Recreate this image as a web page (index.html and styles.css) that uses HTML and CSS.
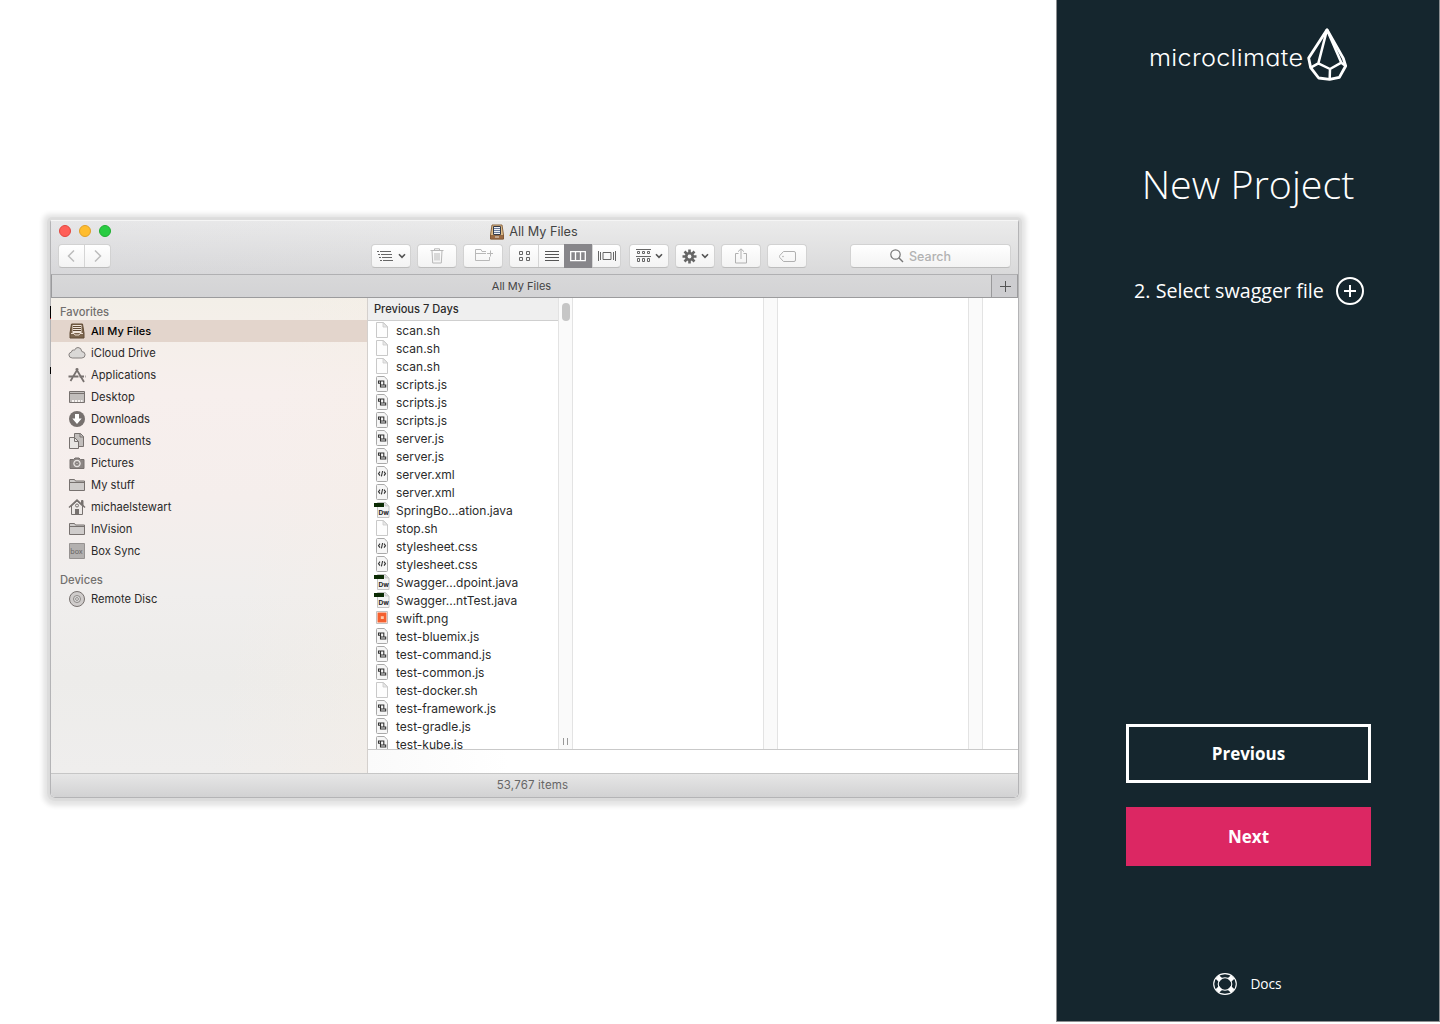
FILE: index.html
```html
<!DOCTYPE html>
<html lang="en">
<head>
<meta charset="utf-8">
<title>Microclimate - New Project</title>
<link rel="stylesheet" href="styles.css">
</head>
<body>
<svg class="defs" width="0" height="0">
  <symbol id="doc" viewBox="0 0 16 18"><path d="M2.5 1.5h7l4 4v11h-11z" fill="#fdfdfd" stroke="#c9c9c9"/><path d="M9 1.5V6h4.5z" fill="#e9e9e9" stroke="#c9c9c9" stroke-width=".8"/></symbol>
  <symbol id="js" viewBox="0 0 16 18"><path d="M3.5 1.5h6.7l3.3 3.3v10.7q0 1-1 1h-9q-1 0-1-1v-13q0-1 1-1z" fill="#f6f6f6" stroke="#a9a9a9"/><path d="M6.500 8.200h-2V6h5.300v4.500M6.500 6v6h5.200v-2H6.500" fill="none" stroke="#333" stroke-width="1.100"/></symbol>
  <symbol id="code" viewBox="0 0 16 18"><path d="M3.500 1.500h6.700l3.300 3.300v10.700q0 1-1 1h-9q-1 0-1-1v-13q0-1 1-1z" fill="#f6f6f6" stroke="#a9a9a9"/><path d="M6 6.700 4.500 8.700 6 10.700M10 6.700l1.500 2L10 10.700M8.600 6l-1.200 5.400" fill="none" stroke="#333" stroke-width="1.100"/></symbol>
  <symbol id="dw" viewBox="0 0 16 18"><path d="M3.500 1.500h8l3.500 3.500v11.500H3.500z" fill="#f4f4f4" stroke="#c4c4c4"/><path d="M11 1.500V5h4" fill="#ddd" stroke="#bbb" stroke-width=".7"/><path d="M0 2h10v4H0z" fill="#0c2c04"/><text x="4.500" y="13.800" font-family="Inter, sans-serif" font-weight="700" font-size="6.600" fill="#222">Dw</text></symbol>
  <symbol id="png" viewBox="0 0 16 18"><path d="M2.500 2.500h11v12h-11z" fill="#fff" stroke="#c2c2c2"/><path d="M3.500 3.500h9v10h-9z" fill="#f4602f"/><path d="M6.800 7.200h3v2.800h-3z" fill="#ffc9a8"/></symbol>
  <symbol id="folder" viewBox="0 0 18 18"><path d="M1.500 14.500v-11h5l1 1.500h9v9.500z" fill="#cfcccb" stroke="#77716f"/><path d="M1.500 6.500h15" stroke="#77716f"/></symbol>
  <symbol id="chev" viewBox="0 0 8 6"><path d="M1 1.200 4 4.400 7 1.200" fill="none" stroke="#555" stroke-width="1.600"/></symbol>
</svg>
<div class="page">
  <main class="stage">
    <section class="window">
      <header class="chrome">
        <div class="title-row">
          <div class="lights"><i class="red"></i><i class="amber"></i><i class="green"></i></div>
          <div class="title">
            <svg width="14" height="16" viewBox="0 0 14 16"><path d="M2 1h10l1.500 10v4H.5v-4z" fill="#e0bd88" stroke="#8a6643"/><path d="M3.500 2.500h7v8h-7z" fill="#eef1f5" stroke="#343a48"/><path d="M4 4.500h6M4 6.500h6M4 8.500h6" stroke="#6d7f9f"/><path d="M.5 11.500h13V15H.5z" fill="#9a6a43" stroke="#754c2c" stroke-width=".6"/><path d="M5 13h4" stroke="#e8e0d8"/></svg>
            <span>All My Files</span>
          </div>
        </div>
        <div class="toolbar">
          <div class="group nav">
            <span><svg width="9" height="14" viewBox="0 0 9 14"><path d="M7 1.500 1.500 7 7 12.500" fill="none" stroke="#bcbcbc" stroke-width="1.500"/></svg></span>
            <span><svg width="9" height="14" viewBox="0 0 9 14"><path d="M2 1.500 7.500 7 2 12.500" fill="none" stroke="#bcbcbc" stroke-width="1.500"/></svg></span>
          </div>
          <div class="group arrange"><svg width="17" height="12" viewBox="0 0 17 12"><path d="M0 1.500h2M3 1.500h11M1 4.500h2M4 4.500h11M2 7.500h2M5 7.500h10M3 10.500h2M6 10.500h10" stroke="#666" fill="none"/></svg><svg width="8" height="6"><use href="#chev"/></svg></div>
          <div class="group"><svg width="14" height="16" viewBox="0 0 14 16"><path d="M.5 2.500h13M4.500 2.500V.8h5v1.700M2 2.500l.7 12.500h8.600L12 2.500M5 5v7.500M7 5v7.500M9 5v7.500" fill="none" stroke="#b8b8b8"/></svg></div>
          <div class="group"><svg class="newfolder" width="18" height="13" viewBox="0 0 18 13"><path d="M11 2.500H7L6 .5H.5v11h14V8M.5 4.500H11M12 4.500h6M15.500 1.500v6" fill="none" stroke="#b8b8b8"/></svg></div>
          <div class="group views">
            <span><svg width="11" height="11" viewBox="0 0 11 11"><path d="M.5.500h3v3h-3zM7.500.500h3v3h-3zM.5 6.500h3v3h-3zM7.500 6.500h3v3h-3z" fill="none" stroke="#666"/></svg></span>
            <span><svg width="14" height="11" viewBox="0 0 14 11"><path d="M0 .5h14M0 3.500h14M0 6.500h14M0 9.500h14" stroke="#555"/></svg></span>
            <span class="on"><svg width="16" height="11" viewBox="0 0 16 11"><path d="M.7.700h14.600v9H.7zM5.500.700v9M10.500.700v9" fill="none" stroke="#fff" stroke-width="1.300"/></svg></span>
            <span><svg width="18" height="11" viewBox="0 0 18 11"><path d="M.5 0v10M2.500 1v8M15.500 1v8M17.500 0v10M5 1.500h8v7H5z" fill="none" stroke="#666"/></svg></span>
          </div>
          <div class="group sort"><svg width="15" height="14" viewBox="0 0 15 14"><path d="M0 .5h15M0 7.500h15M1.500 2.500h2v2h-2zM6.500 2.500h2v2h-2zM11.500 2.500h2v2h-2zM1.500 9.500h2v3h-2zM6.500 9.500h2v3h-2zM11.500 9.500h2v3h-2z" fill="none" stroke="#666"/></svg><svg width="8" height="6"><use href="#chev"/></svg></div>
          <div class="group gear"><svg width="15" height="15" viewBox="-7.500 -7.500 15 15"><g stroke="#666" stroke-width="2.600"><path d="M0-7V7M-7 0H7M-5-5 5 5M5-5-5 5"/></g><circle r="4.600" fill="#666"/><circle r="1.900" fill="#f7f7f7"/></svg><svg width="8" height="6"><use href="#chev"/></svg></div>
          <div class="group"><svg width="12" height="16" viewBox="0 0 12 16"><path d="M3.500 5.500h-3v9.500h11V5.500h-3M6 11V1M3 3.700 6 .8l3 2.900" fill="none" stroke="#b0b0b0"/></svg></div>
          <div class="group"><svg width="17" height="11" viewBox="0 0 17 11"><path d="M4.500.500H15q1.500 0 1.500 1.500v7q0 1.500-1.500 1.500H4.500L.8 6.500q-.6-1 0-2z" fill="none" stroke="#b0b0b0"/><circle cx="4" cy="5.500" r=".8" fill="#b0b0b0"/></svg></div>
          <div class="search"><svg width="14" height="14" viewBox="0 0 14 14"><circle cx="5.500" cy="5.500" r="4.700" fill="none" stroke="#777" stroke-width="1.200"/><path d="m9 9 4 4" stroke="#777" stroke-width="1.400"/></svg><span>Search</span></div>
        </div>
      </header>
      <div class="tabs"><div class="tab">All My Files</div><div class="add"><svg width="11" height="11"><path d="M0 5.500h11M5.500 0v11" stroke="#555"/></svg></div></div>
      <div class="content">
        <nav class="places">
          <h3>Favorites</h3>
          <a class="current"><svg viewBox="0 0 18 18"><path d="M3.500 2h11l1.500 9v5H2v-5z" fill="#7c664e" stroke="#604a34"/><path d="M4.500 3h9v8h-9z" fill="#f0e4da"/><path d="M5 4.500h8M5 6.500h8M5 8.500h8" stroke="#604a34"/><path d="M3 11.500h3l1 1.500h4l1-1.500h3" fill="none" stroke="#eadbcf"/></svg>All My Files</a>
          <a><svg viewBox="0 0 18 18"><path d="M4.200 14q-3.300-.3-3.300-3.100 0-2.300 2.600-2.900 0-2 2-2 .5 0 1 .2Q7.500 3.500 10 3.500q3.300 0 3.800 4 3.300.3 3.300 3.300 0 3-3.200 3.200z" fill="#dad8d6" stroke="#85807e"/></svg>iCloud Drive</a>
          <a><svg viewBox="0 0 18 18"><path d="M8 2.500 16 16M10 2.500 2.500 15" fill="none" stroke="#77716f" stroke-width="1.800"/><path d="M.5 10.500h17" stroke="#77716f" stroke-width="1.800" stroke-dasharray="4.500 1"/></svg>Applications</a>
          <a><svg viewBox="0 0 18 18"><path d="M1.500 3.500h15v11h-15z" fill="#c2bebc" stroke="#77716f"/><path d="M1.500 5.500h15" stroke="#77716f"/><path d="M4 12h2v2H4zM7 12h2v2H7zM10 12h2v2h-2zM13 12h1.500v2H13z" fill="#f7f3f1"/></svg>Desktop</a>
          <a><svg viewBox="0 0 18 18"><circle cx="9" cy="9" r="8" fill="#77716f"/><path d="M7 4h4v4.500h2.700L9 14 4.300 8.500H7z" fill="#fff"/></svg>Downloads</a>
          <a><svg viewBox="0 0 18 18"><path d="M6.500 1.500h6l3 3v10h-9z" fill="#c2bebc" stroke="#77716f"/><path d="M1.500 5.500h5l4 4v7h-9z" fill="#e8e5e3" stroke="#77716f"/><path d="M6.500 5.500v4h4M12 1.500V5h3.500" fill="none" stroke="#77716f"/></svg>Documents</a>
          <a><svg viewBox="0 0 18 18"><path d="M2 5.500h3.500L7 4h4l1.500 1.500H16v9H2z" fill="#8c8684" stroke="#77716f"/><circle cx="9" cy="9.500" r="3.300" fill="#b5b0ae" stroke="#f0ecea"/><circle cx="9" cy="9.500" r="1.500" fill="none" stroke="#77716f"/></svg>Pictures</a>
          <a><svg><use href="#folder"/></svg>My stuff</a>
          <a><svg viewBox="0 0 18 18"><path d="M13.500 6.500v-4h1.500V8" fill="#77716f" stroke="#77716f"/><path d="M3.500 8v8.500h11V8L9 3z" fill="#ece8e6" stroke="#77716f"/><path d="M1 9.500 9 2l8 7.500" fill="none" stroke="#77716f" stroke-width="1.500"/><path d="M7 11h4v5.500H7z" fill="#77716f"/><circle cx="9" cy="7.500" r="1.500" fill="none" stroke="#77716f"/></svg>michaelstewart</a>
          <a><svg><use href="#folder"/></svg>InVision</a>
          <a><svg viewBox="0 0 18 18"><path d="M1.500 1.500h15v15h-15z" fill="#b3b0af" stroke="#969291"/><text x="2.300" y="11.500" font-family="Inter, sans-serif" font-size="7.200" fill="#696564">box</text></svg>Box Sync</a>
          <h3 class="second">Devices</h3>
          <a><svg viewBox="0 0 18 18"><circle cx="9" cy="9" r="7.500" fill="#cfcccb" stroke="#77716f"/><circle cx="9" cy="9" r="3.500" fill="#ddd" stroke="#8d8886"/><circle cx="9" cy="9" r="1.400" fill="#f5f5f5" stroke="#8d8886"/></svg>Remote Disc</a>
        </nav>
        <div class="browser">
          <div class="columns">
            <div class="files">
              <h4>Previous 7 Days</h4>
              <ul>
                <li><svg><use href="#doc"/></svg>scan.sh</li>
                <li><svg><use href="#doc"/></svg>scan.sh</li>
                <li><svg><use href="#doc"/></svg>scan.sh</li>
                <li><svg><use href="#js"/></svg>scripts.js</li>
                <li><svg><use href="#js"/></svg>scripts.js</li>
                <li><svg><use href="#js"/></svg>scripts.js</li>
                <li><svg><use href="#js"/></svg>server.js</li>
                <li><svg><use href="#js"/></svg>server.js</li>
                <li><svg><use href="#code"/></svg>server.xml</li>
                <li><svg><use href="#code"/></svg>server.xml</li>
                <li><svg><use href="#dw"/></svg>SpringBo...ation.java</li>
                <li><svg><use href="#doc"/></svg>stop.sh</li>
                <li><svg><use href="#code"/></svg>stylesheet.css</li>
                <li><svg><use href="#code"/></svg>stylesheet.css</li>
                <li><svg><use href="#dw"/></svg>Swagger...dpoint.java</li>
                <li><svg><use href="#dw"/></svg>Swagger...ntTest.java</li>
                <li><svg><use href="#png"/></svg>swift.png</li>
                <li><svg><use href="#js"/></svg>test-bluemix.js</li>
                <li><svg><use href="#js"/></svg>test-command.js</li>
                <li><svg><use href="#js"/></svg>test-common.js</li>
                <li><svg><use href="#doc"/></svg>test-docker.sh</li>
                <li><svg><use href="#js"/></svg>test-framework.js</li>
                <li><svg><use href="#js"/></svg>test-gradle.js</li>
                <li><svg><use href="#js"/></svg>test-kube.js</li>
              </ul>
            </div>
            <div class="track first"><i class="thumb"></i><i class="grip"></i></div>
            <div class="blank"></div>
            <div class="track"></div>
            <div class="blank"></div>
            <div class="track"></div>
          </div>
          <div class="gutter"></div>
        </div>
      </div>
      <footer class="status">53,767 items</footer>
    </section>
  </main>
  <aside class="wizard">
    <div class="brand"><span>microclimate</span><svg width="42" height="55" viewBox="528 36 126 165"><g fill="none" stroke="#fff" stroke-width="8.500" stroke-linejoin="round"><path d="M591 44 536 129l6 29 24 31 33 4 29-6 19-34-7-23z"/><path d="M591 44 565 145l-23 13M565 145l35 17-1 31M600 162l34-19 13 10M591 44l43 99" stroke-width="7.500"/></g></svg></div>
    <h1><span>New Project</span></h1>
    <div class="step"><span>2. Select swagger file</span><svg width="28" height="28" viewBox="0 0 28 28"><circle cx="14" cy="14" r="13" fill="none" stroke="#fff" stroke-width="2"/><path d="M8 14h12M14 8v12" stroke="#fff" stroke-width="2"/></svg></div>
    <div class="actions"><button class="ghost">Previous</button><button class="primary">Next</button></div>
    <a class="docs"><svg width="24" height="22" viewBox="0 0 24 22"><ellipse cx="12" cy="11" rx="11.300" ry="10.400" fill="none" stroke="#fff" stroke-width="1.100"/><ellipse cx="12" cy="11" rx="6.800" ry="6.300" fill="none" stroke="#fff" stroke-width="1.100"/><path d="m4.300 4 3.400 3.100M19.700 4l-3.400 3.100M4.300 18l3.400-3.100M19.700 18l-3.400-3.100" stroke="#fff" stroke-width="5"/></svg><span>Docs</span></a>
  </aside>
</div>
</body>
</html>
```
FILE: styles.css
```css
* { box-sizing: border-box; }
body { margin: 0; background: #fff; font-family: Inter, "Liberation Sans", sans-serif; }
h1, h3, h4, ul { margin: 0; padding: 0; font-weight: 400; }
svg { display: block; flex: none; }
.defs { display: none; }
.page { display: flex; height: 1024px; }

.stage { width: 1056px; padding: 220px 0 0 50px; }
.window {
  position: relative; width: 969px; height: 578px; display: flex; flex-direction: column;
  border: solid #b4b4b6; border-width: 0 1px 1px; border-radius: 2px 2px 5px 5px;
  box-shadow: 0 0 0 3px rgba(0, 0, 0, .03), 0 1px 5px 7px rgba(0, 0, 0, .11);
}
.window::before {
  content: ""; position: absolute; left: -1px; top: 86px; width: 1px; height: 68px;
  background: linear-gradient(#000 0 12px, #b00 12px 13px, transparent 13px 61px, #000 61px);
}
.chrome { height: 54px; flex: none; background: linear-gradient(90deg, rgba(205,205,215,.15), transparent 50%), linear-gradient(#ebebeb, #d9d9da); border-top: 1px solid #f5f5f5; }
.title-row { position: relative; height: 20px; display: flex; align-items: center; justify-content: center; }
.title { display: flex; align-items: center; gap: 5px; font-size: 12.700px; color: #444; padding-right: 1px; margin-top: 1px; }
.lights { position: absolute; left: 8px; top: 4px; display: flex; gap: 8px; }
.lights i { width: 12px; height: 12px; border-radius: 50%; border: 1px solid #e2463f; background: #ff5f58; }
.lights .amber { background: #ffbd2e; border-color: #e0a028; }
.lights .green { background: #29cc42; border-color: #1fae31; }
.toolbar { display: flex; margin-top: 3px; padding-left: 7px; gap: 6px; color: #666; }
.group, .search {
  display: flex; align-items: center; justify-content: center; width: 40px; height: 24px;
  background: linear-gradient(#fff, #f3f3f3); border: 1px solid #d2d2d2; border-bottom-color: #bdbdbd; border-radius: 4px;
}
.nav { width: 53px; margin-right: 254px; }
.nav span, .views span { flex: 1; height: 100%; display: flex; align-items: center; justify-content: center; }
.nav span + span, .views span + span { border-left: 1px solid #d5d5d5; }
.arrange, .sort, .gear { gap: 4px; }
.sort { margin-left: 2px; }
.newfolder { margin: 0 0 1px 2px; }
.views { width: 112px; }
.views span:first-child { flex: 0 0 28px; }
.views span:nth-child(2) { flex: 0 0 27px; }
.views .on { flex: 0 0 28px; height: 24px; margin-left: -1px; background: #87868a; border: 0; }
.search { width: 161px; margin-left: 37px; gap: 5px; padding-right: 59px; justify-content: flex-end; font-size: 12.500px; font-weight: 500; color: #b2b2b2; }
.tabs { height: 24px; flex: none; display: flex; background: linear-gradient(#d8d8d9, #d3d3d5); border: 1px solid #9b9b9d; border-top-color: #b0b0b2; font-size: 11px; color: #444; }
.tab { flex: 1; display: flex; align-items: center; justify-content: center; }
.add { width: 26px; border-left: 1px solid #99999b; background: #cdcdd0; display: flex; align-items: center; justify-content: center; padding-left: 1px; }
.content { flex: 1; min-height: 0; display: flex; }

.places { width: 317px; border-right: 1px solid #d4d0cd; background: linear-gradient(100deg, transparent 60%, rgba(246,238,229,.4)), linear-gradient(#f3efe8 0, #f7efed 20%, #f5eeec 42%, #f0eeed 62%, #edecea 80%, #efeeed); padding-top: 6px; font-size: 11.200px; }
.places h3 { height: 16px; padding-left: 9px; line-height: 17px; font-size: 11.200px; font-weight: 500; color: #72706e; }
.places .second { margin-top: 10px; }
.places a { height: 22px; display: flex; align-items: center; padding-left: 17px; gap: 5px; color: #2b2a2a; }
.places a svg { width: 18px; height: 18px; }
.places .current { background: #e3d5cc; color: #000; font-size: 11px; font-weight: 500; }

.browser { flex: 1; display: flex; flex-direction: column; background: #fff; }
.columns { height: 452px; display: flex; overflow: hidden; border-bottom: 1px solid #c9c9c9; }
.files { width: 190px; font-size: 12px; color: #2b2b2b; }
.files h4 { height: 23px; padding-left: 6px; line-height: 22px; background: #efefef; border-bottom: 1px solid #cfcfcf; font-size: 11.100px; font-weight: 500; }
.files ul { list-style: none; }
.files li { height: 18px; display: flex; align-items: center; gap: 6px; padding-left: 6px; white-space: nowrap; }
.files li svg { width: 16px; height: 18px; }
.track { width: 15px; background: #fafafa; border: solid #e3e3e3; border-width: 0 1px; display: flex; flex-direction: column; align-items: center; justify-content: space-between; }
.blank { width: 190px; }
.thumb { width: 8px; height: 18px; margin-top: 5px; border-radius: 4px; background: #c6c6c6; }
.grip { width: 5px; height: 7px; margin-bottom: 4px; border: solid #999; border-width: 0 1px; }
.gutter { flex: 1; background: linear-gradient(90deg, #fafafa, #fff 140px); }
.status { height: 24px; flex: none; display: flex; align-items: center; justify-content: center; padding: 0 4px 1px 0; background: linear-gradient(#e6e6e6, #d2d2d3); border-top: 1px solid #c6c6c6; border-radius: 0 0 4px 4px; font-size: 11.500px; letter-spacing: .18px; color: #666; }

.wizard { width: 384px; height: 1022px; display: flex; flex-direction: column; align-items: center; background: #15262e; border: solid #8d8f91; border-width: 0 1px 1px; color: #fff; font-family: "Open Sans", "Noto Sans", sans-serif; }
.brand { margin-top: 27px; height: 55px; display: flex; align-items: center; gap: 3px; }
.brand span { width: 154px; padding-top: 6px; font: 300 23px/30px Inter, sans-serif; font-feature-settings: "cv11"; letter-spacing: .25px; transform: scaleX(1.1); transform-origin: left; }
h1 { margin-top: 75px; height: 54px; line-height: 54px; font-size: 39.400px; font-weight: 300; white-space: nowrap; }
.step { margin-top: 66px; height: 28px; display: flex; align-items: center; gap: 12px; padding-left: 2px; font-size: 19.700px; }
.step span { padding-bottom: 1px; }
.actions { margin-top: 419px; display: flex; flex-direction: column; gap: 24px; }
.actions button { width: 245px; height: 59px; padding: 0 0 0 1px; border: 0; color: #fff; font: 700 17px "Open Sans", sans-serif; }
.actions .ghost { background: transparent; border: 3px solid #fff; }
.actions .primary { background: #dc2763; }
.docs { margin-top: 107px; height: 22px; display: flex; align-items: center; gap: 13px; padding-right: 1px; font-size: 13.700px; }
.docs span { padding-bottom: 1px; }
```
